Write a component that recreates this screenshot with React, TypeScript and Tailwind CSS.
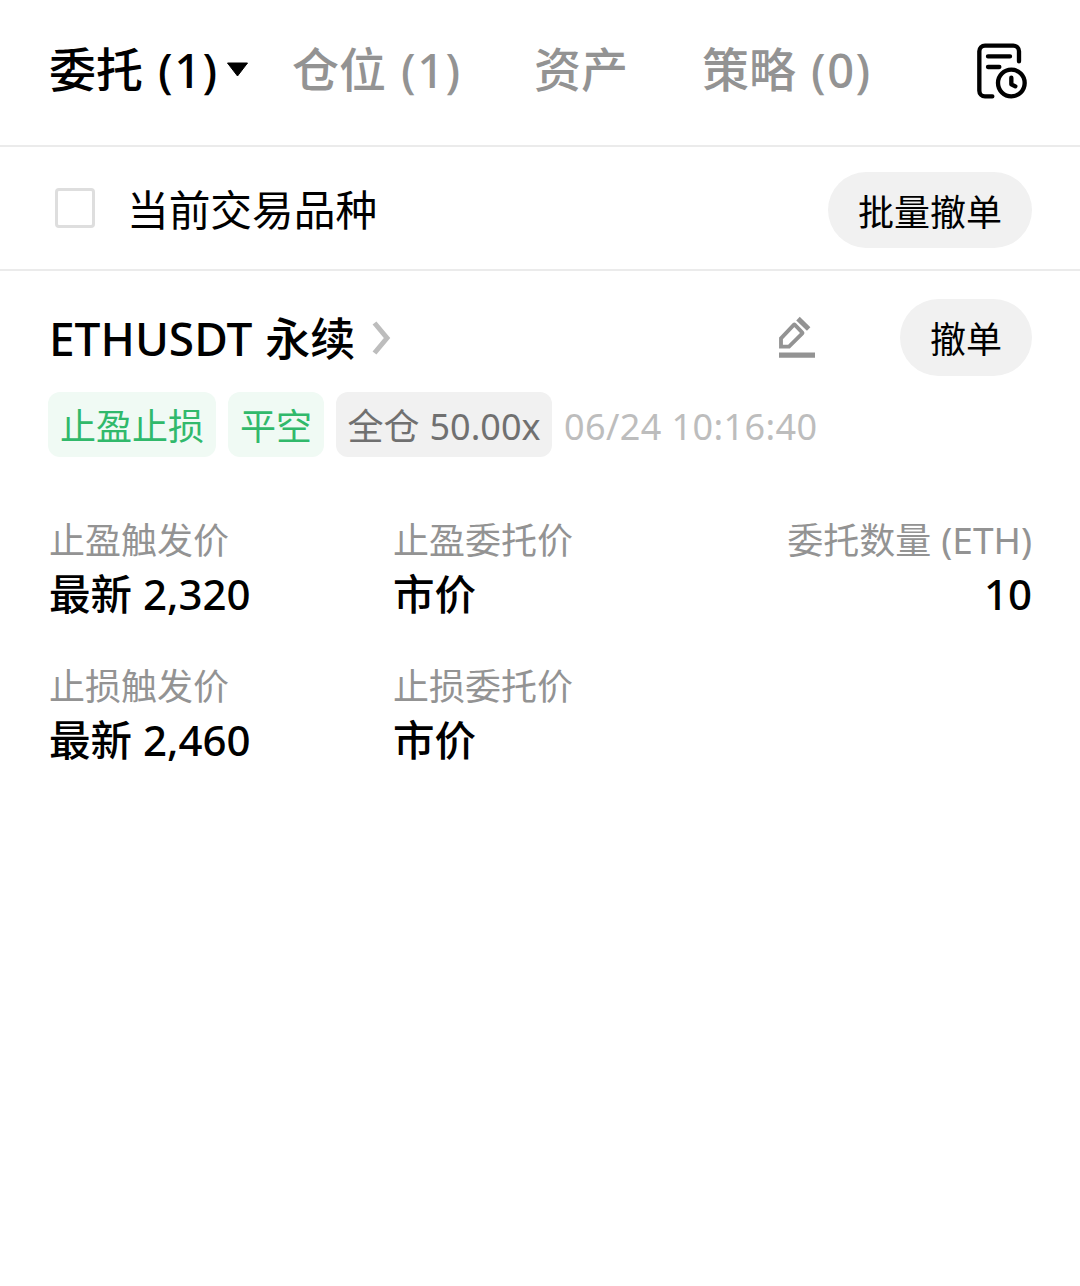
import React, { useState } from 'react';

interface Tab {
  id: string;
  label: string;
  count?: string;
  width: string;
}

interface Field {
  label: string;
  unit?: string;
  value?: string;
  amount?: string;
}

const tabs: Tab[] = [
  { id: 'orders', label: '委托', count: '(1)', width: 'w-[243px]' },
  { id: 'positions', label: '仓位', count: '(1)', width: 'w-[242px]' },
  { id: 'assets', label: '资产', width: 'w-[168px]' },
  { id: 'strategy', label: '策略', count: '(0)', width: 'w-[180px]' },
];

const fields: Field[] = [
  { label: '止盈触发价', value: '最新', amount: '2,320' },
  { label: '止盈委托价', value: '市价' },
  { label: '委托数量', unit: '(ETH)', amount: '10' },
  { label: '止损触发价', value: '最新', amount: '2,460' },
  { label: '止损委托价', value: '市价' },
];

function HistoryIcon() {
  return (
    <svg className="h-[60px] w-[54px]" viewBox="48 36 162 180" fill="none" stroke="black" strokeWidth="13" strokeLinecap="round" strokeLinejoin="round">
      <path d="M177 94V64a17 17 0 0 0-17-17H75a17 17 0 0 0-17 17v118a17 17 0 0 0 17 17h22" />
      <path d="M84 79h66M84 111h34" />
      <circle cx="154" cy="159" r="40" />
      <path d="M154 143v20l12 6" />
    </svg>
  );
}

function EditIcon() {
  return (
    <svg className="h-[43px] w-[38px]" viewBox="84 81 114 129" fill="none" stroke="#939393" strokeWidth="11.500">
      <path d="M93 148l39-41q1-1 2 0l23 24q1 1 0 2l-40 40H93z" />
      <path d="M144 89l32 31" strokeWidth="15" />
      <path d="M87 198.500h108" strokeWidth="16" />
    </svg>
  );
}

export default function App() {
  const [active, setActive] = useState('orders');
  const [onlyCurrent, setOnlyCurrent] = useState(false);

  return (
    <div className="min-h-[1286px] w-[1080px] bg-white text-black font-['Noto_Sans','Noto_Sans_CJK_SC',sans-serif]">
      {/* TABS */}
      <header className="flex h-[147px] items-start border-b-2 border-[#ebebeb] pt-[34px] pr-[50px] pl-[49px]">
        {tabs.map((tab) => (
          <button
            key={tab.id}
            onClick={() => setActive(tab.id)}
            className={`flex h-[70px] shrink-0 items-center text-[47px] leading-[70px] font-medium whitespace-nowrap ${tab.width} ${active === tab.id ? 'text-black' : 'text-[#939393]'}`}
          >
            <span className="mb-[4px] font-['Noto_Sans_CJK_SC',sans-serif]">{tab.label}</span>
            {tab.count && <span className="mt-[1px] ml-[15px] text-[47px] tracking-[1.500px]">{tab.count}</span>}
            {active === tab.id && (
              <svg className="ml-[7px] h-[15px] w-[23px]" viewBox="0 0 23 15">
                <path d="M1.500 1h20L11.500 14z" fill="black" stroke="black" strokeLinejoin="round" />
              </svg>
            )}
          </button>
        ))}
        <button className="mt-[8px] ml-auto">
          <HistoryIcon />
        </button>
      </header>

      {/* FILTER */}
      <section className="flex h-[124px] items-center justify-between border-b-2 border-[#ebebeb] pr-[48px] pl-[55px]">
        <button onClick={() => setOnlyCurrent(!onlyCurrent)} className="flex items-center">
          <span className={`h-[40px] w-[40px] rounded-[4px] border-[3px] border-[#dedede] ${onlyCurrent ? 'bg-[#dedede]' : 'bg-white'}`} />
          <span className="ml-[32px] text-[41.700px] leading-[60px] font-['Noto_Sans_CJK_SC',sans-serif]">当前交易品种</span>
        </button>
        <button className="mt-[4px] h-[76px] w-[204px] rounded-full bg-[#f1f1f1] text-[36px] leading-[76px] font-['Noto_Sans_CJK_SC',sans-serif]">
          批量撤单
        </button>
      </section>

      {/* ORDER */}
      <main className="pt-[28px] pr-[48px] pl-[48px]">
        <div className="flex h-[77px] items-center">
          <h2 className="ml-[1px] flex items-center text-[45px] leading-[73px] font-medium">
            <span className="mt-[2px] text-[46px]">ETHUSDT</span>
            <span className="mb-[3px] ml-[13px] font-['Noto_Sans_CJK_SC',sans-serif]">永续</span>
          </h2>
          <svg className="ml-[17px] h-[34px] w-[19px]" viewBox="0 0 19 34" fill="none" stroke="#bdbdbd" strokeWidth="5">
            <path d="M2.500 2l12.500 15L2.500 32" />
          </svg>
          <button className="ml-auto">
            <EditIcon />
          </button>
          <button className="ml-[84px] h-[77px] w-[132px] rounded-full bg-[#f1f1f1] text-[36px] leading-[77px] font-['Noto_Sans_CJK_SC',sans-serif]">
            撤单
          </button>
        </div>

        <div className="mt-[16px] flex h-[65px] items-center gap-[12px] text-[36px] leading-[65px] whitespace-nowrap">
          <span className="h-[65px] w-[168px] rounded-[12px] bg-[#f0faf4] text-center leading-[64px] text-[#31b96b] font-['Noto_Sans_CJK_SC',sans-serif]">止盈止损</span>
          <span className="h-[65px] w-[96px] rounded-[12px] bg-[#f0faf4] text-center leading-[64px] text-[#31b96b] font-['Noto_Sans_CJK_SC',sans-serif]">平空</span>
          <span className="flex h-[65px] w-[216px] justify-center rounded-[12px] bg-[#f1f1f1] text-[#707070]">
            <span className="leading-[64px] font-['Noto_Sans_CJK_SC',sans-serif]">全仓</span>
            <span className="ml-[10px] leading-[69px]">50.00x</span>
          </span>
          <span className="mt-[3px] tracking-[0.400px] text-[#bdbdbd]">06/24 10:16:40</span>
        </div>

        <div className="mt-[55px] ml-[1px] grid grid-cols-[344px_300px_1fr] gap-y-[38px]">
          {fields.map((field, i) => (
            <div key={field.label} className={`flex flex-col ${i % 3 === 2 ? 'items-end' : 'items-start'}`}>
              <div className="flex h-[54px] items-center text-[36px] leading-[54px] text-[#939393]">
                <span className="mb-[3px] font-['Noto_Sans_CJK_SC',sans-serif]">{field.label}</span>
                {field.unit && <span className="mt-[2px] ml-[10px] text-[37px]">{field.unit}</span>}
              </div>
              <div className="flex h-[54px] items-center text-[41.500px] leading-[54px] font-medium">
                {field.value && <span className="mb-[2px] font-['Noto_Sans_CJK_SC',sans-serif]">{field.value}</span>}
                {field.amount && <span className={field.value ? 'mt-[1px] ml-[11px] text-[42px]' : 'mt-[1px] text-[42px]'}>{field.amount}</span>}
              </div>
            </div>
          ))}
        </div>
      </main>
    </div>
  );
}
